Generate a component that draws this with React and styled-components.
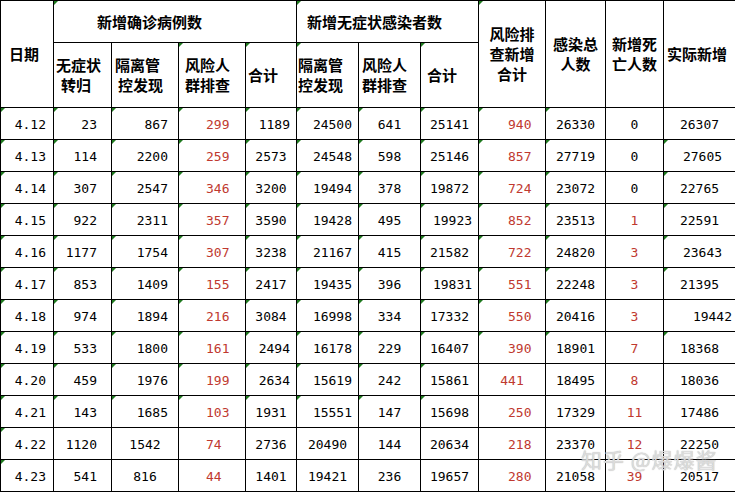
import React from 'react';
import styled, { createGlobalStyle } from 'styled-components';

const GlobalStyle = createGlobalStyle`
    html, body {
        margin: 0;
        padding: 0;
        background: #fff;
    }
`;

const Wrap = styled.div`
    position: relative;
    width: 735px;
    height: 492px;
    overflow: hidden;
    background: #fff;
`;

const Table = styled.table`
    width: 735px;
    table-layout: fixed;
    border-collapse: collapse;
    color: #000;
`;

const Row = styled.tr`
    height: ${p => p.$h}px;
`;

const Th = styled.td`
    position: relative;
    border: 1px solid #000;
    padding: 0;
    font-family: "Noto Sans CJK SC", "Noto Sans", sans-serif;
    font-weight: 700;
    font-size: 15px;
    line-height: 20px;
    text-align: ${p => p.$center ? 'center' : 'left'};
    padding-left: ${p => p.$pad || 0}px;
    vertical-align: middle;
    white-space: nowrap;

    &::before {
        content: '';
        display: ${p => p.$mark ? 'block' : 'none'};
        position: absolute;
        left: 0;
        top: 0;
        border-top: 4px solid #1f7a1f;
        border-right: 4px solid transparent;
    }
`;

const Line = styled.span`
    display: block;
    padding-left: ${p => p.$indent || 0}px;
`;

const Td = styled.td`
    position: relative;
    border: 1px solid #000;
    padding: 2px 0 0 0;
    padding-left: ${p => p.$pl || 0}px;
    padding-right: ${p => p.$pr || 0}px;
    text-align: ${p => p.$align};
    vertical-align: middle;
    font-family: "DejaVu Sans Mono", "Liberation Mono", monospace;
    font-size: 13px;
    line-height: 16px;
    color: ${p => p.$red ? '#c0392f' : '#000'};
    white-space: nowrap;

    &::before {
        content: '';
        display: ${p => p.$mark ? 'block' : 'none'};
        position: absolute;
        left: 0;
        top: 0;
        border-top: 4px solid #1f7a1f;
        border-right: 4px solid transparent;
    }
`;

const Watermark = styled.div`
    position: absolute;
    left: 581px;
    top: 447px;
    font-family: "Noto Sans CJK SC", sans-serif;
    font-size: 21px;
    line-height: 24px;
    letter-spacing: 1px;
    color: rgba(228, 228, 228, 0.85);
    text-shadow: 0 0 1px rgba(0, 0, 0, 0.35), 0 0 1px rgba(255, 255, 255, 0.9);
    white-space: nowrap;
    pointer-events: none;
`;

const widths = [53, 58, 67, 67, 51, 62, 62, 58, 67, 60, 58, 72];

const rows = [
    ['4.12', '23', '867', '299', '1189', '24500', '641', '25141', '940', '26330', '0', '26307'],
    ['4.13', '114', '2200', '259', '2573', '24548', '598', '25146', '857', '27719', '0', '27605'],
    ['4.14', '307', '2547', '346', '3200', '19494', '378', '19872', '724', '23072', '0', '22765'],
    ['4.15', '922', '2311', '357', '3590', '19428', '495', '19923', '852', '23513', '1', '22591'],
    ['4.16', '1177', '1754', '307', '3238', '21167', '415', '21582', '722', '24820', '3', '23643'],
    ['4.17', '853', '1409', '155', '2417', '19435', '396', '19831', '551', '22248', '3', '21395'],
    ['4.18', '974', '1894', '216', '3084', '16998', '334', '17332', '550', '20416', '3', '19442'],
    ['4.19', '533', '1800', '161', '2494', '16178', '229', '16407', '390', '18901', '7', '18368'],
    ['4.20', '459', '1976', '199', '2634', '15619', '242', '15861', '441', '18495', '8', '18036'],
    ['4.21', '143', '1685', '103', '1931', '15551', '147', '15698', '250', '17329', '11', '17486'],
    ['4.22', '1120', '1542', '74', '2736', '20490', '144', '20634', '218', '23370', '12', '22250'],
    ['4.23', '541', '816', '44', '1401', '19421', '236', '19657', '280', '21058', '39', '20517'],
];

// how each column sits in its cell
const colSpec = [
    { align: 'right', pr: 7 },
    { align: 'right', pr: 14 },
    { align: 'right', pr: 10 },
    { align: 'left', pl: 27 },
    { align: 'center' },
    { align: 'right', pr: 6 },
    { align: 'center' },
    { align: 'center' },
    { align: 'left', pl: 29 },
    { align: 'center' },
    { align: 'center' },
    { align: 'center' },
];

const overrides = {
    '10-2': { align: 'center' },
    '11-2': { align: 'center' },
    '0-4': { align: 'right', pr: 6 },
    '7-4': { align: 'right', pr: 6 },
    '8-4': { align: 'right', pr: 6 },
    '10-5': { align: 'center' },
    '11-5': { align: 'center' },
    '3-7': { align: 'center', pl: 6 },
    '5-7': { align: 'center', pl: 6 },
    '8-8': { align: 'center' },
    '1-11': { align: 'center', pl: 6 },
    '4-11': { align: 'center', pl: 6 },
    '6-11': { align: 'right', pr: 3 },
};

function hasMark(r, c) {
    if (r >= 10) return c === 0;
    if (r >= 8) return c <= 7;
    if (c === 10) return false;
    if (c === 11 && (r === 0 || r === 6)) return false;
    return true;
}

function isRed(c, v) {
    if (c === 3 || c === 8) return true;
    if (c === 10) return v !== '0';
    return false;
}

export default function App() {
    return (
        <Wrap>
            <GlobalStyle />
            <Table>
                <colgroup>
                    {widths.map((w, i) => <col key={i} style={{ width: w }} />)}
                </colgroup>
                <tbody>
                    <Row $h={42}>
                        <Th rowSpan={2} $pad={8}>日期</Th>
                        <Th colSpan={4} $pad={43} $mark>新增确诊病例数</Th>
                        <Th colSpan={3} $pad={10} $mark>新增无症状感染者数</Th>
                        <Th rowSpan={2} $center $mark>
                            <Line>风险排</Line>
                            <Line>查新增</Line>
                            <Line>合计</Line>
                        </Th>
                        <Th rowSpan={2} $center>
                            <Line>感染总</Line>
                            <Line $indent={-6}>人数</Line>
                        </Th>
                        <Th rowSpan={2} $center>
                            <Line>新增死</Line>
                            <Line>亡人数</Line>
                        </Th>
                        <Th rowSpan={2} $pad={3}>实际新增</Th>
                    </Row>
                    <Row $h={65}>
                        <Th $pad={2}>
                            <Line>无症状</Line>
                            <Line $indent={5}>转归</Line>
                        </Th>
                        <Th $pad={3}>
                            <Line>隔离管</Line>
                            <Line $indent={3}>控发现</Line>
                        </Th>
                        <Th $pad={6} $mark>
                            <Line>风险人</Line>
                            <Line>群排查</Line>
                        </Th>
                        <Th $pad={2} $mark>合计</Th>
                        <Th $pad={1} $mark>
                            <Line>隔离管</Line>
                            <Line>控发现</Line>
                        </Th>
                        <Th $pad={3}>
                            <Line>风险人</Line>
                            <Line>群排查</Line>
                        </Th>
                        <Th $pad={6} $mark>合计</Th>
                    </Row>
                    {rows.map((row, r) => (
                        <Row $h={32} key={row[0]}>
                            {row.map((v, c) => {
                                const spec = overrides[`${r}-${c}`] || colSpec[c];
                                return (
                                    <Td
                                        key={c}
                                        $align={spec.align}
                                        $pl={spec.pl}
                                        $pr={spec.pr}
                                        $red={isRed(c, v)}
                                        $mark={hasMark(r, c)}
                                    >
                                        {v}
                                    </Td>
                                );
                            })}
                        </Row>
                    ))}
                </tbody>
            </Table>
            <Watermark>知乎 @爆爆酱</Watermark>
        </Wrap>
    );
}
